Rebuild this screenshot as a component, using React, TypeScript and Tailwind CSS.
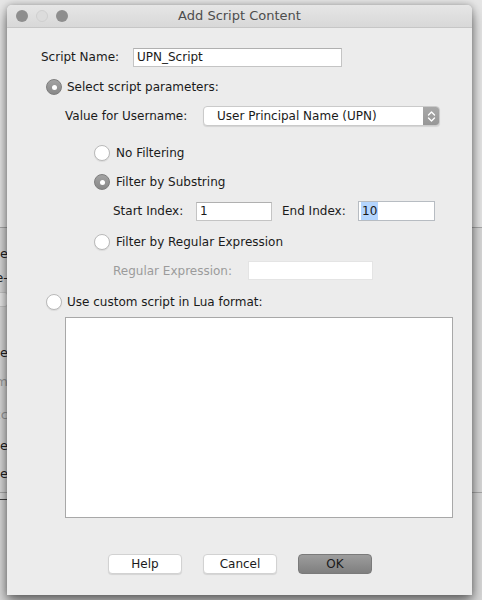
import React from 'react';

const font = { fontFamily: '"DejaVu Sans", "Liberation Sans", sans-serif' };

const Radio = ({ checked }: { checked?: boolean }) =>
  checked ? (
    <span className="flex h-[16px] w-[16px] shrink-0 items-center justify-center rounded-full border border-[#7d7d7d] bg-gradient-to-b from-[#a3a3a3] to-[#888888]">
      <span className="h-[5px] w-[5px] rounded-full bg-white" />
    </span>
  ) : (
    <span className="h-[16px] w-[16px] shrink-0 rounded-full border border-[#b9b9b9] bg-white shadow-[0_1px_1px_rgba(0,0,0,0.08)]" />
  );

const Field = ({ w, children, faint }: { w: string; children?: React.ReactNode; faint?: boolean }) => (
  <div
    className={`${w} flex h-[19px] items-center bg-white pl-[3px] text-[12px] text-[#1a1a1a] ${
      faint ? 'border border-[#e4e4e4]' : 'border border-[#c4c4c4] border-t-[#b0b0b0]'
    }`}
  >
    {children}
  </div>
);

const Button = ({ label, primary }: { label: string; primary?: boolean }) => (
  <button
    className={`flex h-[20px] w-[74px] items-center justify-center rounded-[4px] text-[12px] text-[#1a1a1a] ${
      primary
        ? 'bg-gradient-to-b from-[#9d9d9d] to-[#7f7f7f] border border-[#7a7a7a]'
        : 'bg-white border border-[#d2d2d2] shadow-[0_1px_1px_rgba(0,0,0,0.1)]'
    }`}
  >
    {label}
  </button>
);

// window behind the dialog, only a sliver of it shows on the left
const Backdrop = () => (
  <div className="flex h-full w-full flex-col">
    <div className="h-[228px] border-b border-[#a9a9a9] bg-[#e6e6e6]" />
    <div className="flex flex-1 flex-col bg-[#d9d9d9]">
      <div className="flex w-[8px] flex-col items-end overflow-hidden text-[13px] leading-[16px]">
        <span className="mt-[18px] whitespace-nowrap text-[#222]">Name</span>
        <span className="mt-[8px] whitespace-nowrap text-[#222]">Time-</span>
        <span className="mt-[6px] h-[15px] w-[20px] shrink-0 rounded-[3px] border border-[#c6c6c6] bg-[#e9e9e9]" />
        <span className="mt-[38px] whitespace-nowrap text-[#222]">Name</span>
        <span className="mt-[13px] whitespace-nowrap text-[#9a9a9a]">Item</span>
        <span className="mt-[17px] whitespace-nowrap text-[#9a9a9a]">Acc</span>
        <span className="mt-[15px] whitespace-nowrap text-[#222]">Use</span>
        <span className="mt-[12px] whitespace-nowrap text-[#222]">Use</span>
      </div>
      <div className="mt-[10px] border-t border-[#a9a9a9]" />
      <div className="flex w-[8px] justify-end overflow-hidden text-[13px] leading-[12px] text-[#444]">
        <span className="whitespace-nowrap">—</span>
      </div>
    </div>
  </div>
);

const Chevrons = () => (
  <svg width="9" height="13" viewBox="0 0 9 13" fill="none" stroke="white" strokeWidth="1.4" strokeLinecap="round" strokeLinejoin="round">
    <path d="M1.5 5 L4.5 2 L7.5 5" />
    <path d="M1.5 8 L4.5 11 L7.5 8" />
  </svg>
);

export default function App() {
  return (
    <div className="relative h-[600px] w-[482px] overflow-hidden bg-[#d9d9d9]" style={font}>
      <Backdrop />
      <div className="absolute left-[7px] top-[5px] flex h-[590px] w-[465px] flex-col overflow-hidden rounded-t-[5px] bg-[#ececec] shadow-[0_7px_14px_rgba(0,0,0,0.5),0_0_6px_rgba(0,0,0,0.25)]">
        {/* title bar */}
        <div className="relative flex h-[23px] shrink-0 items-center justify-center border-b border-[#c6c6c6] bg-gradient-to-b from-[#e6e6e6] to-[#d8d8d8]">
          <div className="absolute left-[9px] top-[5px] flex gap-[8px]">
            <span className="h-[12px] w-[12px] rounded-full bg-[#8e8e8e]" />
            <span className="h-[12px] w-[12px] rounded-full border border-[#cfcfcf] bg-[#dcdcdc]" />
            <span className="h-[12px] w-[12px] rounded-full bg-[#8e8e8e]" />
          </div>
          <span className="text-[13px] text-[#4d4d4d]">Add Script Content</span>
        </div>

        {/* body */}
        <div className="flex flex-col text-[12px] text-[#1a1a1a]">
          <div className="mt-[19px] flex h-[20px] items-center pl-[34px]">
            <span className="w-[92px]">Script Name:</span>
            <Field w="w-[209px]">UPN_Script</Field>
          </div>

          <div className="mt-[12px] flex h-[16px] items-center gap-[5px] pl-[39px]">
            <Radio checked />
            <span>Select script parameters:</span>
          </div>

          <div className="mt-[11px] flex h-[20px] items-center pl-[58px]">
            <span className="w-[138px]">Value for Username:</span>
            <div className="flex h-[20px] w-[237px] items-stretch overflow-hidden rounded-[4px] border border-[#cacaca] bg-white shadow-[0_1px_1px_rgba(0,0,0,0.1)]">
              <span className="flex flex-1 items-center pl-[13px]">User Principal Name (UPN)</span>
              <span className="flex w-[16px] items-center justify-center bg-gradient-to-b from-[#a8a8a8] to-[#979797]">
                <Chevrons />
              </span>
            </div>
          </div>

          <div className="mt-[19px] flex h-[16px] items-center gap-[6px] pl-[87px]">
            <Radio />
            <span>No Filtering</span>
          </div>

          <div className="mt-[13px] flex h-[16px] items-center gap-[6px] pl-[87px]">
            <Radio checked />
            <span>Filter by Substring</span>
          </div>

          <div className="mt-[11px] flex h-[20px] items-center pl-[106px]">
            <span className="w-[83px]">Start Index:</span>
            <Field w="w-[76px]">1</Field>
            <span className="ml-[10px] w-[76px]">End Index:</span>
            <div className="flex h-[20px] w-[77px] items-center border border-[#b7bcc2] bg-white pl-[2px]">
              <span className="bg-[#b4d5fe] px-[1px]">10</span>
            </div>
          </div>

          <div className="mt-[13px] flex h-[16px] items-center gap-[6px] pl-[87px]">
            <Radio />
            <span>Filter by Regular Expression</span>
          </div>

          <div className="mt-[11px] flex h-[19px] items-center pl-[106px]">
            <span className="w-[135px] text-[#9b9b9b]">Regular Expression:</span>
            <Field w="w-[125px]" faint />
          </div>

          <div className="mt-[14px] flex h-[16px] items-center gap-[5px] pl-[39px]">
            <Radio />
            <span>Use custom script in Lua format:</span>
          </div>

          <div className="ml-[58px] mt-[7px] h-[201px] w-[388px] border border-[#a8a8a8] bg-white" />

          <div className="mt-[36px] flex gap-[21px] pl-[101px]">
            <Button label="Help" />
            <Button label="Cancel" />
            <Button label="OK" primary />
          </div>
        </div>
      </div>
    </div>
  );
}
